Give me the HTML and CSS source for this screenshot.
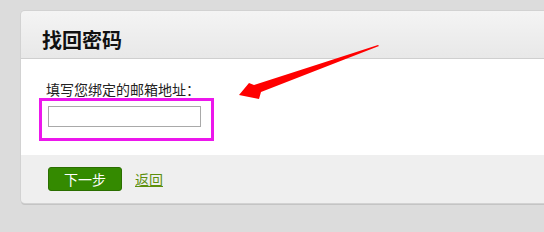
FILE: index.html
```html
<!DOCTYPE html>
<html lang="zh-CN">
<head>
    <meta charset="UTF-8">
    <title>找回密码</title>
    <link rel="stylesheet" href="styles.css">
</head>
<body>

<div class="panel">
    <div class="panel_hd">
        <h2 class="title">找回密码</h2>
    </div>
    <div class="panel_bd">
        <label class="lbl" for="email">填写您绑定的邮箱地址：</label>
        <div class="mark">
            <input class="txt" id="email" type="text"/>
        </div>
    </div>
    <div class="panel_ft">
        <input class="btn" type="button" value="下一步"/>
        <a class="back" href="#">返回</a>
    </div>
</div>

<!-- 标注箭头 -->
<svg class="arrow" width="544" height="232" viewBox="0 0 544 232">
    <polygon fill="#f00" points="239,95 249,83 254,85 378,45 379,46 261,92 259,99"/>
</svg>

</body>
</html>
```

FILE: styles.css
```css
html, body {
    margin: 0;
    padding: 0;
}

body {
    background-color: #dcdcdc;
    font-family: "Noto Sans CJK SC", "Liberation Sans", sans-serif;
    font-size: 14px;
    color: #222;
    height: 232px;
}

.panel {
    margin: 11px 0 0 21px;
    border-radius: 4px 0 0 4px;
    overflow: hidden;
    box-shadow: 0 0 0 1px #d2d2d2, 0 2px 0 #c4c4c4;
}

.panel_hd {
    height: 48px;
    box-sizing: border-box;
    padding: 19px 0 0 21px;
    background: linear-gradient(#f4f4f4, #e8e8e8);
    border-bottom: 1px solid #cfcfcf;
}

.title {
    margin: 0;
    font-size: 20px;
    line-height: 20px;
    font-weight: bold;
    color: #111;
}

.panel_bd {
    height: 96px;
    box-sizing: border-box;
    padding: 22px 0 0 18px;
    background-color: #fff;
}

.lbl {
    display: block;
    margin-left: 7px;
    line-height: 16px;
    margin-bottom: 1px;
}

.mark {
    display: inline-block;
    border: 3px solid #ec17ec;
    padding: 5px 10px 11px 6px;
}

.txt {
    display: block;
    width: 153px;
    height: 21px;
    box-sizing: border-box;
    margin: 0;
    border: 1px solid #a9a9a9;
    background-color: #fff;
}

.panel_ft {
    height: 48px;
    box-sizing: border-box;
    padding: 12px 0 0 27px;
    background-color: #efefef;
    display: flex;
    align-items: flex-start;
    gap: 13px;
}

.btn {
    width: 74px;
    height: 24px;
    margin: 0;
    padding: 0;
    border: 1px solid #2b6e00;
    border-radius: 3px;
    background-color: #348a00;
    color: #fff;
    font-family: inherit;
    font-size: 14px;
}

.back {
    line-height: 24px;
    color: #5d8f0c;
    text-decoration: underline;
}

.arrow {
    position: absolute;
    left: 0;
    top: 0;
    pointer-events: none;
}
```
